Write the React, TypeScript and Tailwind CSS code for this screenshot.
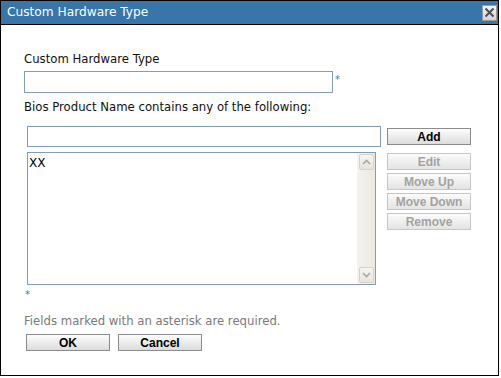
import { ReactNode } from 'react'

const body = "font-['DejaVu_Sans',sans-serif]"
const btnFont = "font-['Liberation_Sans',Arial,sans-serif]"

function Button({ children, disabled }: { children: ReactNode; disabled?: boolean }) {
  return (
    <button
      className={`${btnFont} w-[84px] h-[17px] flex items-center justify-center text-[12px] font-bold leading-none border ${
        disabled
          ? 'border-[#c6c6c6] text-[#a3a3a3] bg-gradient-to-b from-[#fbfbfb] to-[#e4e4e4]'
          : 'border-[#8c8c8c] text-black bg-gradient-to-b from-[#fdfdfd] to-[#dcdcdc]'
      }`}
    >
      {children}
    </button>
  )
}

function ScrollArrow({ up }: { up?: boolean }) {
  return (
    <div className="w-[15px] h-[16px] mx-auto rounded-[2px] border border-[#d6d4c9] bg-gradient-to-b from-[#f6f5f0] to-[#e6e4db] flex items-center justify-center">
      <svg width="9" height="6" viewBox="0 0 9 6">
        <path
          d={up ? 'M1 5 L4.5 1.5 L8 5' : 'M1 1 L4.5 4.5 L8 1'}
          fill="none"
          stroke="#a9a9a4"
          strokeWidth="1.6"
        />
      </svg>
    </div>
  )
}

export default function App() {
  return (
    <div className="w-[501px] h-[378px] bg-white">
      <div className="w-[499px] h-[376px] border border-black flex flex-col">
        <div className="h-[24px] bg-[#3875a9] border-b border-black flex items-center justify-between pl-[6px] pr-[1px]">
          <span className={`${body} text-[12.2px] text-white leading-none`}>Custom Hardware Type</span>
          <div className="w-[15px] h-[16px] bg-gradient-to-b from-[#f2f2f2] to-[#d4d4d4] border border-[#9a9a9a] flex items-center justify-center">
            <svg width="11" height="11" viewBox="0 0 11 11">
              <path d="M1.5 1.5 L9.5 9.5 M9.5 1.5 L1.5 9.5" stroke="#4d4d4d" strokeWidth="2" />
            </svg>
          </div>
        </div>

        <div className={`${body} flex flex-col pl-[23px] text-[11.7px] leading-[14px] text-[#111]`}>
          <div className="mt-[27px]">Custom Hardware Type</div>
          <div className="mt-[5px] flex items-start gap-[2px]">
            <div className="w-[309px] h-[22px] border border-[#7f9db9] bg-white" />
            <span className="text-[#3d7bb3] text-[10px] leading-[12px] mt-[3px]">*</span>
          </div>
          <div className="mt-[7px]">Bios Product Name contains any of the following:</div>

          <div className="pl-[3px]">
            <div className="mt-[12px] flex items-start gap-[6px]">
              <div className="w-[354px] h-[21px] border border-[#7f9db9] bg-white" />
              <div className="mt-[2px]">
                <Button>Add</Button>
              </div>
            </div>

            <div className="mt-[5px] flex items-start gap-[11px]">
              <div className="w-[349px] h-[133px] border border-[#7f9db9] bg-white flex">
                <div className="flex-1 pl-[1px] pt-[3px] text-[12px] leading-[14px] text-black">XX</div>
                <div className="w-[18px] bg-gradient-to-r from-[#f4f3ee] to-[#ebe9e1] flex flex-col justify-between py-[1px]">
                  <ScrollArrow up />
                  <ScrollArrow />
                </div>
              </div>
              <div className="mt-[1px] flex flex-col gap-[3px]">
                <Button disabled>Edit</Button>
                <Button disabled>Move Up</Button>
                <Button disabled>Move Down</Button>
                <Button disabled>Remove</Button>
              </div>
            </div>
          </div>

          <div className="mt-[4px] text-[#3d7bb3] text-[10px] leading-[12px] pl-[1px]">*</div>
          <div className="mt-[13px] text-[#7a7a7a]">Fields marked with an asterisk are required.</div>
          <div className="mt-[6px] pl-[2px] flex gap-[8px]">
            <Button>OK</Button>
            <Button>Cancel</Button>
          </div>
        </div>
      </div>
    </div>
  )
}
